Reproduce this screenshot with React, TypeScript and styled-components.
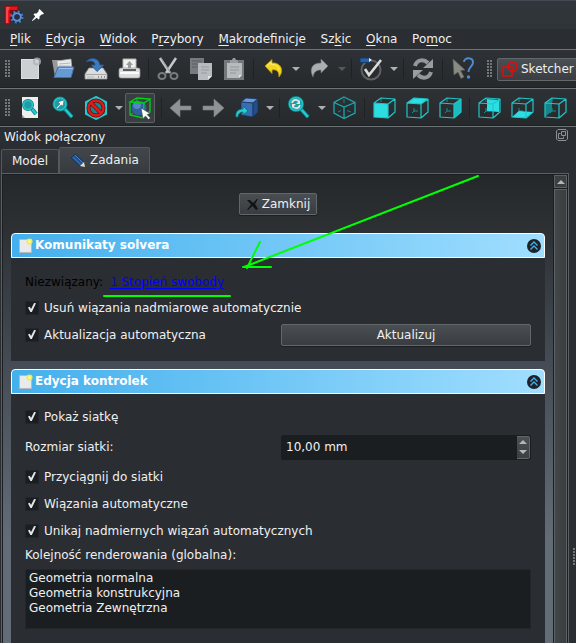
import React, { useState } from 'react';
import styled, { createGlobalStyle, css } from 'styled-components';

const GlobalStyle = createGlobalStyle`
  * { box-sizing: border-box; }
  body {
    margin: 0;
    background: #2a2d31;
    color: #eff0f1;
    font: 12px/15px "DejaVu Sans", sans-serif;
  }
  button, input { font: inherit; color: inherit; margin: 0; }
  button { padding: 0; border: 0; background: none; }
`;

const Window = styled.div`
  position: relative;
  display: flex;
  flex-direction: column;
  min-height: 100vh;
  overflow: hidden;
`;

const TitleBar = styled.header`
  display: flex;
  align-items: center;
  gap: 7px;
  height: 29px;
  padding: 0 4px;
  border-top: 1px solid #434a54;
  background: linear-gradient(#31363b, #2f3439);
`;

const MenuBar = styled.nav`
  height: 21px;
  padding: 0 3px;
  border-bottom: 1px solid #6e7376;
  background: #2a2d31;
`;

const MenuItems = styled.div`
  display: flex;
  justify-content: space-between;
  max-width: 456px;
  height: 20px;
`;

const MenuItem = styled.button`
  padding: 0 7px;
  white-space: nowrap;
  flex: none;
  u { text-underline-offset: 2px; }
`;

const ToolBar = styled.div<{ $tall?: boolean }>`
  display: flex;
  align-items: center;
  height: ${p => (p.$tall ? 39 : 38)}px;
  border-bottom: 1px solid #6e7376;
  background: linear-gradient(#2e3135, #26292c);
  box-shadow: inset 0 -1px 0 #1d2023;
  flex: none;
  & > * { flex: none; }
`;

const dots = css`
  background:
    repeating-linear-gradient(transparent 0 2px, #292c30 2px 3px),
    repeating-linear-gradient(90deg, #74787a 0 2px, transparent 2px 3px);
`;

const Grip = styled.span<{ $late?: boolean }>`
  width: 6px;
  height: 18px;
  margin: ${p => (p.$late ? '0 4px 0 9px' : '0 2px 0 5px')};
  ${dots}
`;

const Divider = styled.span`
  width: 6px;
  height: 20px;
  background: linear-gradient(#1f2225, #1f2225) center / 1px 100% no-repeat;
`;

const ToolButton = styled.button`
  display: grid;
  place-items: center;
  width: 33px;
  height: 30px;
  &[aria-pressed='true'] {
    width: 30px;
    margin-right: 3px;
    border: 1px solid #5c6164;
    border-radius: 2px;
    background: #3a3e42;
  }
`;

const CaretButton = styled.button<{ $dim?: boolean }>`
  display: grid;
  place-items: center;
  width: 13px;
  height: 30px;
  color: ${p => (p.$dim ? '#53585e' : '#aeb0b2')};
`;

const WorkbenchButton = styled.button`
  display: flex;
  align-items: center;
  gap: 3px;
  height: 23px;
  width: 130px;
  padding-left: 4px;
  border: 1px solid #63686b;
  border-radius: 2px;
  background: linear-gradient(#4a4f53, #3a3e42);
`;

const DockTitle = styled.div`
  display: flex;
  align-items: center;
  justify-content: space-between;
  height: 20px;
  padding: 0 8px 0 4px;
`;

const TabList = styled.div`
  display: flex;
  align-items: flex-end;
  height: 26px;
  padding-left: 1px;
`;

const Tab = styled.button`
  display: flex;
  align-items: center;
  gap: 4px;
  height: 24px;
  padding: 0 10px;
  border: 1px solid #54595c;
  border-bottom: 0;
  border-radius: 2px 2px 0 0;
  background: linear-gradient(#33373a, #2b2e32);
  &[aria-selected='true'] {
    height: 26px;
    background: linear-gradient(#42474b, #373b3f);
  }
`;

const DockBody = styled.div`
  display: flex;
  flex: 1;
`;

const Pane = styled.div`
  display: flex;
  flex: 1;
  margin-left: 1px;
  border: solid #5a5f62;
  border-width: 1px 1px 0;
`;

const Splitter = styled.div`
  display: flex;
  align-items: center;
  justify-content: flex-end;
  width: 7px;
  padding-top: 298px;
  flex: none;
`;

const SplitterGrip = styled.span`
  width: 3px;
  height: 18px;
  ${dots}
`;

const Tasks = styled.main`
  display: flex;
  flex-direction: column;
  flex: 1;
  padding: 19px 8px 0 9px;
  background: linear-gradient(#25282b, #2d3134 60px, #31363b 80px, #454c55 190px, #626c77 365px, #626c77);
  box-shadow: inset 1px 1px 0 #1c1f22;
`;

const PushButton = styled.button<{ $center?: boolean }>`
  display: flex;
  align-items: center;
  justify-content: center;
  gap: 3px;
  height: 22px;
  padding: 0 6px;
  border: 1px solid #62676a;
  border-radius: 2px;
  background: linear-gradient(#494e52, #393d41);
  box-shadow: 0 1px 0 #1c1f22;
  ${p => p.$center && 'align-self: center;'}
`;

const Section = styled.section<{ $fill?: boolean }>`
  display: flex;
  flex-direction: column;
  margin-top: ${p => (p.$fill ? '8px' : '18px')};
  ${p => p.$fill && 'flex: 1;'}
`;

const SectionHeader = styled.h2`
  display: flex;
  align-items: center;
  gap: 1px;
  height: 25px;
  margin: 0;
  padding: 0 3px 0 6px;
  border: 1px solid #fff;
  border-radius: 4px 4px 0 0;
  background: linear-gradient(90deg, #43b0ed, #a0deff);
  font-size: 12px;
  font-weight: bold;
  color: #fff;
  button { margin-left: auto; display: flex; }
`;

const SectionBody = styled.div<{ $roomy?: boolean }>`
  flex: 1;
  padding: ${p => (p.$roomy ? '9px 14px 14px' : '11px 14px 12px')};
  background: #2a2d31;
`;

const Row = styled.div<{ $h?: number }>`
  display: grid;
  grid-template-columns: 1fr 1fr;
  gap: 6px;
  align-items: center;
  height: ${p => p.$h ?? 28}px;
`;

const Status = styled.p`
  display: flex;
  align-items: center;
  gap: 7px;
  height: 26px;
  margin: 0;
  color: #000;
  a { color: #0000ff; text-underline-offset: 2px; }
`;

const CheckLabel = styled.label`
  display: flex;
  align-items: center;
  gap: 5px;
  white-space: nowrap;
`;

const CheckInput = styled.input`
  appearance: none;
  display: grid;
  width: 14px;
  height: 14px;
  border: 1px solid #222529;
  background: #1b1e20;
  &:checked::before {
    content: '';
    width: 8px;
    height: 9px;
    margin: 1px 2px;
    background: #e4e6e7;
    clip-path: polygon(0 50%, 22% 42%, 38% 66%, 76% 0, 100% 4%, 48% 100%, 30% 100%);
  }
`;

const SpinBox = styled.div`
  display: flex;
  height: 25px;
  padding: 1px;
  border-radius: 2px;
  background: #1b1e20;
  input {
    flex: 1;
    min-width: 0;
    padding: 0 4px;
    border: 0;
    outline: 0;
    background: none;
  }
`;

const Steppers = styled.div`
  display: flex;
  flex-direction: column;
  width: 13px;
  border: 1px solid #62676a;
  border-left: 0;
  border-radius: 0 2px 2px 0;
  background: linear-gradient(#4b5054, #3b3f43);
  color: #b4b7b9;
  button { flex: 1; display: grid; place-items: center; }
`;

const ListLabel = styled.div`
  height: 24px;
  line-height: 21px;
`;

const OrderList = styled.ul`
  height: 60px;
  margin: 0;
  padding: 1px 3px;
  list-style: none;
  border: 1px solid #24272a;
  background: #1b1e20;
  line-height: 15px;
`;

const ScrollBar = styled.div`
  display: flex;
  flex-direction: column;
  gap: 1px;
  width: 15px;
  padding: 1px 1px 0 1px;
  background: #1c1f22;
  flex: none;
`;

const ScrollUp = styled.button`
  display: grid;
  place-items: center;
  height: 13px;
  border: 1px solid #5c6164;
  background: #3b3f42;
  color: #b4b7b9;
`;

const ScrollThumb = styled.div`
  flex: 1;
  border: solid #5c6164;
  border-width: 1px 1px 0;
  background: linear-gradient(90deg, #44474a, #3a3d40);
`;

const Annotation = styled.svg`
  position: absolute;
  left: 100px;
  top: 172px;
  pointer-events: none;
`;

const Svg = ({ size = 24, children }: { size?: number; children: React.ReactNode }) => (
  <svg width={size} height={size} viewBox={`0 0 ${size} ${size}`} fill="none" aria-hidden="true">
    {children}
  </svg>
);

const Triangle = ({ up }: { up?: boolean }) => (
  <svg width="8" height="4" viewBox="0 0 8 4" aria-hidden="true">
    <path d={up ? 'M0 4L4 0 8 4Z' : 'M0 0H8L4 4Z'} fill="currentColor" />
  </svg>
);

const AppIcon = () => (
  <Svg size={20}>
    <path d="M1 1H14V5.500H6V8H11V12H6V19H1Z" fill="#e3161d" stroke="#7c0b0f" />
    <path d="M2 2H6L4 6V18H2Z" fill="#f4494c" />
    <circle cx="13" cy="12" r="4" stroke="#16294a" strokeWidth="4.500" />
    <circle cx="13" cy="12" r="5.500" stroke="#4b7fc4" strokeWidth="2" strokeDasharray="2 2.320" />
    <circle cx="13" cy="12" r="3.800" stroke="#5d92d8" strokeWidth="2" />
    <circle cx="13" cy="12" r="2.200" fill="#2b3036" />
  </Svg>
);

const PinIcon = () => (
  <Svg size={14}>
    <path d="M8.500 1L13 5.500 11.500 6.500 10.500 6.500 8.500 8.500V10.500L7.500 11.500 2.500 6.500 3.500 5.500H5.500L7.500 3.500V2.500Z" fill="#fff" />
    <path d="M5 8L1.500 12.500 6 9Z" fill="#fff" stroke="#fff" />
  </Svg>
);

const NewIcon = () => (
  <Svg>
    <path d="M3 2H19L21 4V22H3Z" fill="#dcdfe1" />
    <path d="M4 3H20V21H4Z" fill="#cbd0d3" />
    <circle cx="19" cy="4.500" r="4" fill="#aeb1b4" opacity=".8" />
    <circle cx="19" cy="4.500" r="2" fill="#cfd2d4" />
  </Svg>
);

const OpenIcon = () => (
  <Svg>
    <path d="M1 3H8L10 5V20H4Z" fill="#98999a" />
    <path d="M6 4L20 2 21 12H7Z" fill="#e9eaea" stroke="#a6a8a8" strokeWidth=".7" />
    <path d="M8 7L19 6M8 9H19" stroke="#b5b7b8" />
    <path d="M7 10H23L20 20.500H3Z" fill="#659bd5" stroke="#3e6fac" />
    <path d="M8 11.500H22" stroke="#9cc2eb" />
  </Svg>
);

const SaveIcon = () => (
  <Svg>
    <path d="M5 11H19L23 17V22H1V17Z" fill="#dcdedd" stroke="#989b9b" strokeWidth=".8" />
    <path d="M2 17.500H22" stroke="#a5a8a8" />
    <path d="M3 20H10" stroke="#b3b5b5" />
    <path d="M14 20H15M17 20H18M20 20H21" stroke="#777" strokeWidth="1.500" />
    <path d="M2 5C5 0 15 0 16 8H20L13 14.500 7 8H11C11 4 6 3 2 5Z" fill="#3d79bd" stroke="#255386" strokeWidth=".8" />
  </Svg>
);

const PrintIcon = () => (
  <Svg>
    <path d="M6 2H19V13H6Z" fill="#efefee" stroke="#b1b3b3" />
    <path d="M12.500 4L16 8H14V11H11V8H9Z" fill="#989b9c" />
    <rect x="2" y="11" width="21" height="10" rx="2" fill="#dcdddd" stroke="#999" strokeWidth=".7" />
    <rect x="6" y="12" width="13" height="2" fill="#5d6062" />
    <path d="M3 16H22" stroke="#fafafa" strokeWidth="2" />
  </Svg>
);

const CutIcon = () => (
  <Svg>
    <path d="M4 1L14 16M20 1L10 16" stroke="#c5c8ca" strokeWidth="2.500" />
    <path d="M5 1L14 15" stroke="#909497" />
    <ellipse cx="6" cy="19" rx="3.500" ry="3" stroke="#777b7e" strokeWidth="2" />
    <ellipse cx="18" cy="19" rx="3.500" ry="3" stroke="#777b7e" strokeWidth="2" />
  </Svg>
);

const CopyIcon = () => (
  <Svg>
    <path d="M1 1H15V17H1Z" fill="#777b80" />
    <path d="M3 4H13M3 7H13M3 10H13" stroke="#5c6065" />
    <path d="M9 6H23V19L19 23H9Z" fill="#b8bcc0" />
    <path d="M12 10H20M12 13H20M12 16H18" stroke="#989ca0" />
    <path d="M19 23V19H23Z" fill="#e2e4e5" />
  </Svg>
);

const PasteIcon = () => (
  <Svg>
    <path d="M2 3H22V23H2Z" fill="#74787c" />
    <path d="M5 6H20V18L17 21H5Z" fill="#b7bbbe" />
    <path d="M8 10H17M8 13H17M8 16H14" stroke="#93979b" />
    <path d="M8 3H10L11 1H13L14 3H16V6H8Z" fill="#999da0" />
    <path d="M17 21V18H20Z" fill="#e2e4e5" />
  </Svg>
);

const UndoIcon = () => (
  <Svg>
    <path d="M4 9L11 2.500V6C19 5 24 13 18 20C18 15 16 12 11 13V16.500Z" fill="#f2d51c" stroke="#b99b08" strokeWidth=".8" />
    <path d="M6 9L10 5V7.500C15 7 18 10 18 13" stroke="#fff07a" />
  </Svg>
);

const RedoIcon = () => (
  <Svg>
    <path d="M21 9L14 2V6C5 6 2 12 6 20C7 15 9 13 14 13V16Z" fill="#abaeb1" stroke="#737679" strokeWidth=".6" />
  </Svg>
);

const ValidateIcon = () => (
  <Svg>
    <circle cx="12" cy="13" r="9.500" stroke="#5e6263" strokeWidth="2" />
    <path d="M6 12L10 18 22 3" stroke="#dcddd8" strokeWidth="2.600" />
    <rect x="1" y="1" width="10" height="4.500" rx="1" fill="#2b61a5" stroke="#183a68" />
    <path d="M10 1L13 3 10 5Z" fill="#eee" />
  </Svg>
);

const RefreshIcon = () => (
  <Svg>
    <path d="M4 9C6 2 13 2 17 6M20 15C18 22 11 22 7 18" stroke="#94989b" strokeWidth="4" />
    <path d="M22 2V11H12Z" fill="#999da0" />
    <path d="M2 22V13H12Z" fill="#999da0" />
  </Svg>
);

const WhatsThisIcon = () => (
  <Svg>
    <path d="M3 2L15 13 10.500 13.500 14 20 11 21.500 8 15 4 18Z" fill="#888a83" stroke="#62645e" strokeWidth=".6" />
    <path d="M14 5C14 0 23 0 23 5.500C23 9 18.500 10 18.500 15" stroke="#4c8ad0" strokeWidth="2" />
    <circle cx="18.500" cy="20" r="1.700" fill="#4c8ad0" />
  </Svg>
);

const SketcherIcon = () => (
  <Svg size={16}>
    <rect x="1" y="6" width="9" height="9" stroke="#e10d0d" strokeWidth="1.500" />
    <circle cx="10.500" cy="5.500" r="4.500" stroke="#e10d0d" strokeWidth="1.500" />
  </Svg>
);

const Lens = ({ x = 9, y = 9, r = 6, end = 21 }: { x?: number; y?: number; r?: number; end?: number }) => (
  <>
    <path d={`M${x + 4} ${y + 4}L${end} ${end}`} stroke="#087f86" strokeWidth="4" />
    <path d={`M${x + 4} ${y + 4}L${end} ${end}`} stroke="#23cbd1" strokeWidth="2.400" />
    <circle cx={x} cy={y} r={r} fill="#0f7076" stroke="#087f86" strokeWidth="3" />
    <circle cx={x} cy={y} r={r} fill="#1c9ea4" stroke="#27c3c9" strokeWidth="1.600" />
  </>
);

const FitAllIcon = () => (
  <Svg>
    <path d="M4 1H20V22H6L4 19Z" fill="#eeeeed" />
    <path d="M4 19V22H7Z" fill="#8b8d8c" />
    <Lens x={10} y={9} r={4.5} end={18} />
  </Svg>
);

const FitSelectionIcon = () => (
  <Svg>
    <Lens x={9} y={8} r={6} end={21} />
    <path d="M5 12L9 8 7 6 13 4 12 10 10 9 6 13Z" fill="#f4f7f7" stroke="#234d50" strokeWidth=".4" />
  </Svg>
);

const DrawStyleIcon = () => (
  <Svg>
    <path d="M12 1L22 6V18L12 23 2 18V6Z" fill="#12898e" stroke="#25c9cf" strokeWidth="2" />
    <circle cx="12" cy="12" r="7.500" stroke="#6d0909" strokeWidth="4" />
    <path d="M7 7L17 17" stroke="#6d0909" strokeWidth="4" />
    <circle cx="12" cy="12" r="7.500" stroke="#dc1c1c" strokeWidth="2.400" />
    <path d="M7 7L17 17" stroke="#dc1c1c" strokeWidth="2.800" />
  </Svg>
);

const BoundingBoxIcon = () => (
  <Svg>
    <circle cx="11" cy="12" r="7.500" fill="#2f5f9f" />
    <circle cx="9" cy="9" r="4" fill="#5585c4" />
    <path d="M2 6L9 2 22 3 16 7ZM2 6V19L15 22 16 7M22 3V16L15 22" stroke="#00d419" strokeWidth="1.300" />
    <path d="M9 2V5M2 19L5 17M20 16H22" stroke="#00d419" />
    <path d="M13 12L22 17.500 19 18.500 22.500 22 20.500 23.500 17.500 20 15 22.500Z" fill="#fff" stroke="#333" strokeWidth=".5" />
  </Svg>
);

const ArrowIcon = ({ right }: { right?: boolean }) => (
  <Svg>
    <path
      d={right ? 'M22 12L12 3V10H1V14H12V21Z' : 'M1 12L11 3V10H22V14H11V21Z'}
      fill="#909396"
      stroke="#7b7f82"
      strokeWidth=".6"
    />
  </Svg>
);

const LinkIcon = () => (
  <Svg>
    <path d="M6 6L11 2 23 3 18 7Z" fill="#6a9ad8" stroke="#16325c" strokeWidth=".7" />
    <path d="M6 6L18 7V21L6 19Z" fill="#3a6cb0" stroke="#16325c" strokeWidth=".7" />
    <path d="M18 7L23 3V16L18 21Z" fill="#254d86" stroke="#16325c" strokeWidth=".7" />
    <path d="M1 21C0 15 4 13 8 13V10L13 15 8 19V16C5 16 3 18 3 21Z" fill="#25cdd0" stroke="#0a6f74" strokeWidth=".8" />
  </Svg>
);

const SyncViewIcon = () => (
  <Svg>
    <Lens x={9} y={8} r={6.5} end={21} />
    <path d="M5 7C6 3 11 3 12 6M13 9C12 13 7 13 6 10" stroke="#e4e6e0" strokeWidth="1.600" />
    <path d="M13 4V8H9ZM5 12V8H9Z" fill="#e4e6e0" />
  </Svg>
);

const IsoIcon = () => (
  <Svg>
    <path d="M11 1L22 6.500V17L11 22.500 1 17V6.500ZM1 6.500L11 11 22 6.500M11 11V22.500" stroke="#1aa9ac" strokeWidth="1.300" />
    <path d="M11 3V7M5 16L8 14.500M14 14.500L18 16" stroke="#14888b" />
  </Svg>
);

const faces = {
  front: 'M2 7L16 8V22L2 21Z',
  top: 'M2 7L9 2 23 3 16 8Z',
  right: 'M16 8L23 3V16L16 22Z',
  rear: 'M10 3L22 4V16L10 15Z',
  bottom: 'M2 21L9 15 23 16 16 22Z',
  left: 'M2 7L9 2V15L2 21Z',
};

const CubeIcon = ({ face }: { face: keyof typeof faces }) => (
  <Svg>
    <path d="M9 2V6M9 12V15L7 17M9 15H13" stroke="#168f93" />
    <path d={faces[face]} fill={face === 'left' ? '#11868b' : face === 'right' ? '#1cb9be' : '#2cdee1'} />
    <path d="M2 7L9 2 23 3 16 8ZM2 7V21L16 22V8M16 22L23 16V3" stroke="#22c5c8" strokeWidth="1.200" strokeLinejoin="round" />
  </Svg>
);

const FloatIcon = () => (
  <Svg size={12}>
    <path d="M2 .500H10L11.500 2V10L10 11.500H2L.500 10V2Z" stroke="#8e9192" />
    <path d="M5.500 2.500H9.500V6.500H5.500ZM4.500 4.500H2.500V9.500H7.500V7.500" stroke="#8e9192" />
  </Svg>
);

const PencilIcon = () => (
  <Svg size={16}>
    <path d="M1 5L5 1 14 9 10 13Z" fill="#214f8a" stroke="#17365f" />
    <path d="M3 4L11 12" stroke="#3768a8" strokeWidth="1.500" />
    <path d="M5 2L13 10" stroke="#4f82c2" />
    <path d="M14 9L15 14 10 13Z" fill="#e5ddc9" />
  </Svg>
);

const CloseIcon = () => (
  <Svg size={13}>
    <path d="M1 2H4L7 5 11 1H12L9 6 12 11 10 12 6.500 8 2 12H1L5 6.500Z" fill="#101214" />
  </Svg>
);

const PageIcon = () => (
  <Svg size={16}>
    <path d="M1.500 1.500H13.500V14.500H1.500Z" fill="#e9eaeb" stroke="#b7b8b8" />
    <circle cx="11.500" cy="3.500" r="3" fill="#f3ed43" />
    <circle cx="11.500" cy="3.500" r="1.200" fill="#fffde0" />
  </Svg>
);

const CollapseIcon = () => (
  <Svg size={14}>
    <circle cx="7" cy="7" r="7" fill="#1f2226" />
    <path d="M3.500 6.500L7 3 10.500 6.500M3.500 10.500L7 7 10.500 10.500" stroke="#3eaef0" strokeWidth="1.400" />
  </Svg>
);

const menus = [
  ['', 'P', 'lik'],
  ['', 'E', 'dycja'],
  ['', 'W', 'idok'],
  ['P', 'r', 'zybory'],
  ['', 'M', 'akrodefinicje'],
  ['Sz', 'k', 'ic'],
  ['', 'O', 'kna'],
  ['Po', 'm', 'oc'],
];

const Tool = ({ name, pressed, children }: { name: string; pressed?: boolean; children: React.ReactNode }) => (
  <ToolButton type="button" aria-label={name} aria-pressed={pressed}>
    {children}
  </ToolButton>
);

const Caret = ({ name, dim }: { name: string; dim?: boolean }) => (
  <CaretButton type="button" aria-label={name} $dim={dim}>
    <Triangle />
  </CaretButton>
);

const Check = ({ children }: { children: string }) => {
  const [on, setOn] = useState(true);
  return (
    <CheckLabel>
      <CheckInput type="checkbox" checked={on} onChange={e => setOn(e.target.checked)} />
      {children}
    </CheckLabel>
  );
};

const Header = ({ title }: { title: string }) => (
  <SectionHeader>
    <PageIcon />
    {title}
    <button type="button" aria-label={`Zwiń: ${title}`}>
      <CollapseIcon />
    </button>
  </SectionHeader>
);

export default function App() {
  const [grid, setGrid] = useState(10);
  const gridText = `${grid.toFixed(2).replace('.', ',')} mm`;

  return (
    <>
      <GlobalStyle />
      <Window>
        <TitleBar>
          <AppIcon />
          <PinIcon />
        </TitleBar>

        <MenuBar>
          <MenuItems>
            {menus.map(([before, key, after]) => (
              <MenuItem type="button" key={before + key + after}>
                {before}
                <u>{key}</u>
                {after}
              </MenuItem>
            ))}
          </MenuItems>
        </MenuBar>

        <ToolBar $tall>
          <Grip />
          <Tool name="Nowy"><NewIcon /></Tool>
          <Tool name="Otwórz"><OpenIcon /></Tool>
          <Tool name="Zapisz"><SaveIcon /></Tool>
          <Tool name="Drukuj"><PrintIcon /></Tool>
          <Divider />
          <Tool name="Wytnij"><CutIcon /></Tool>
          <Tool name="Kopiuj"><CopyIcon /></Tool>
          <Tool name="Wklej"><PasteIcon /></Tool>
          <Divider />
          <Tool name="Cofnij"><UndoIcon /></Tool>
          <Caret name="Historia cofania" />
          <Tool name="Ponów"><RedoIcon /></Tool>
          <Caret name="Historia ponawiania" dim />
          <Divider />
          <Tool name="Sprawdź"><ValidateIcon /></Tool>
          <Caret name="Opcje sprawdzania" />
          <Divider />
          <Tool name="Odśwież"><RefreshIcon /></Tool>
          <Divider />
          <Tool name="Co to jest?"><WhatsThisIcon /></Tool>
          <Grip $late />
          <WorkbenchButton type="button">
            <SketcherIcon />
            Sketcher
          </WorkbenchButton>
        </ToolBar>

        <ToolBar>
          <Grip />
          <Tool name="Pokaż wszystko"><FitAllIcon /></Tool>
          <Tool name="Pokaż zaznaczenie"><FitSelectionIcon /></Tool>
          <Tool name="Styl rysowania"><DrawStyleIcon /></Tool>
          <Caret name="Style rysowania" />
          <Tool name="Ramka otaczająca" pressed><BoundingBoxIcon /></Tool>
          <Divider />
          <Tool name="Wstecz"><ArrowIcon /></Tool>
          <Tool name="Dalej"><ArrowIcon right /></Tool>
          <Tool name="Przejdź do obiektu"><LinkIcon /></Tool>
          <Caret name="Opcje obiektu" />
          <Divider />
          <Tool name="Synchronizuj widok"><SyncViewIcon /></Tool>
          <Caret name="Opcje widoku" />
          <Tool name="Izometryczny"><IsoIcon /></Tool>
          <Divider />
          <Tool name="Przód"><CubeIcon face="front" /></Tool>
          <Tool name="Góra"><CubeIcon face="top" /></Tool>
          <Tool name="Prawa"><CubeIcon face="right" /></Tool>
          <Divider />
          <Tool name="Tył"><CubeIcon face="rear" /></Tool>
          <Tool name="Dół"><CubeIcon face="bottom" /></Tool>
          <Tool name="Lewa"><CubeIcon face="left" /></Tool>
        </ToolBar>

        <DockTitle>
          Widok połączony
          <button type="button" aria-label="Odłącz panel"><FloatIcon /></button>
        </DockTitle>

        <TabList role="tablist">
          <Tab type="button" role="tab" aria-selected={false}>Model</Tab>
          <Tab type="button" role="tab" aria-selected={true}>
            <PencilIcon />
            Zadania
          </Tab>
        </TabList>

        <DockBody>
          <Pane>
            <Tasks>
              <PushButton type="button" $center>
                <CloseIcon />
                Zamknij
              </PushButton>

              <Section>
                <Header title="Komunikaty solvera" />
                <SectionBody>
                  <Status>
                    Niezwiązany: <a href="#dof">1 Stopień swobody</a>
                  </Status>
                  <Row $h={26}>
                    <Check>Usuń wiązania nadmiarowe automatycznie</Check>
                  </Row>
                  <Row>
                    <Check>Aktualizacja automatyczna</Check>
                    <PushButton type="button">Aktualizuj</PushButton>
                  </Row>
                </SectionBody>
              </Section>

              <Section $fill>
                <Header title="Edycja kontrolek" />
                <SectionBody $roomy>
                  <Row><Check>Pokaż siatkę</Check></Row>
                  <Row $h={32}>
                    <label htmlFor="grid-size">Rozmiar siatki:</label>
                    <SpinBox>
                      <input id="grid-size" type="text" value={gridText} readOnly />
                      <Steppers>
                        <button type="button" aria-label="Zwiększ" onClick={() => setGrid(g => g + 1)}>
                          <Triangle up />
                        </button>
                        <button type="button" aria-label="Zmniejsz" onClick={() => setGrid(g => Math.max(0, g - 1))}>
                          <Triangle />
                        </button>
                      </Steppers>
                    </SpinBox>
                  </Row>
                  <Row><Check>Przyciągnij do siatki</Check></Row>
                  <Row $h={26}><Check>Wiązania automatyczne</Check></Row>
                  <Row><Check>Unikaj nadmiernych wiązań automatycznych</Check></Row>
                  <ListLabel id="order-label">Kolejność renderowania (globalna):</ListLabel>
                  <OrderList aria-labelledby="order-label">
                    <li>Geometria normalna</li>
                    <li>Geometria konstrukcyjna</li>
                    <li>Geometria Zewnętrzna</li>
                  </OrderList>
                </SectionBody>
              </Section>
            </Tasks>
            <ScrollBar>
              <ScrollUp type="button" aria-label="Przewiń w górę"><Triangle up /></ScrollUp>
              <ScrollThumb />
            </ScrollBar>
          </Pane>
          <Splitter><SplitterGrip /></Splitter>
        </DockBody>

        <Annotation width="384" height="130" viewBox="0 0 384 130" fill="none" aria-hidden="true">
          <path
            d="M378 4L144 95M160 70L147 96M143 95H171M4 124H130"
            stroke="#00ff00"
            strokeWidth="2"
            strokeLinecap="round"
          />
        </Annotation>
      </Window>
    </>
  );
}
